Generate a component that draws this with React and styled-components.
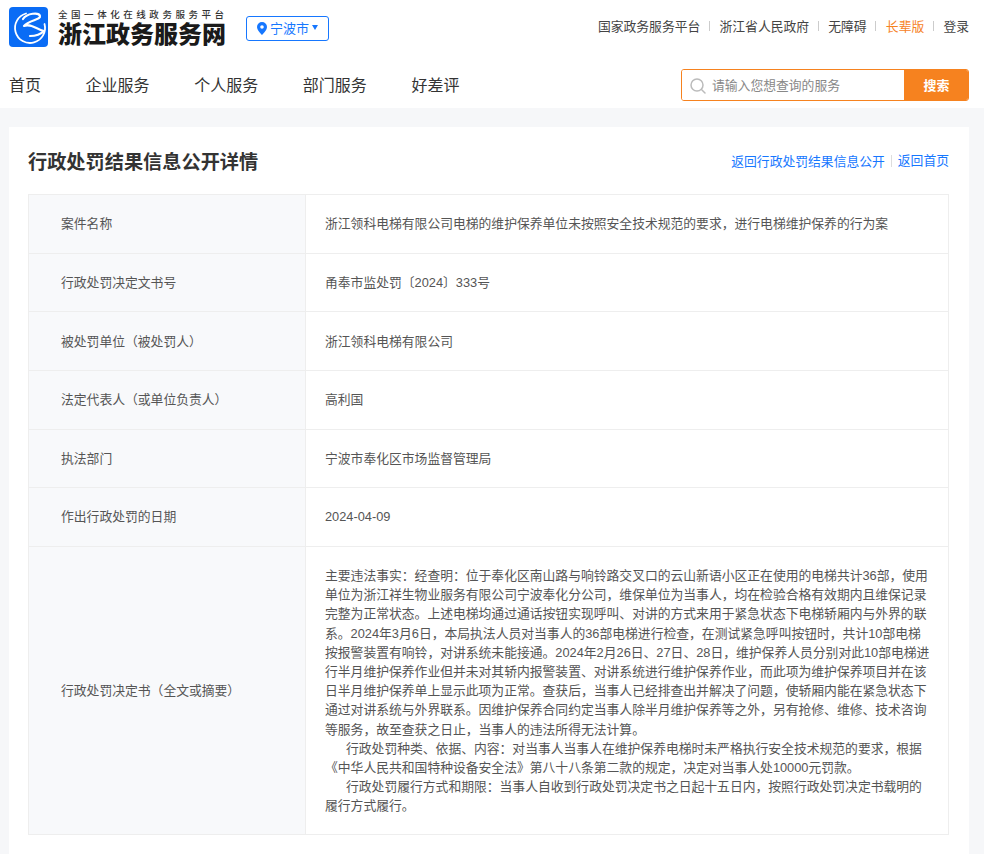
import React from "react";
import styled, { createGlobalStyle } from "styled-components";

const FONT = `"Liberation Sans", "Noto Sans CJK SC", sans-serif`;

const Global = createGlobalStyle`
  html, body { margin: 0; padding: 0; background: #f6f7f9; }
  body { font-family: ${FONT}; font-size: 12.8px; line-height: 19.2px; color: #555; overflow: hidden; }
  * { box-sizing: border-box; }
`;

const Header = styled.header`
  background: #fff;
  height: 108px;
  padding: 7px 15px 0 9px;
`;
const TopRow = styled.div`
  display: flex;
  align-items: flex-start;
  justify-content: space-between;
  height: 62px;
`;
const Brand = styled.div`
  display: flex;
  align-items: flex-start;
`;
const LogoText = styled.div`
  margin-left: 10px;
  width: 168px;
`;
const Slogan = styled.div`
  font-size: 9.5px;
  line-height: 12px;
  font-weight: 500;
  color: #333;
  letter-spacing: 3.55px;
  white-space: nowrap;
  margin-top: 2px;
`;
const SiteName = styled.div`
  font-size: 24px;
  line-height: 28px;
  font-weight: 900;
  color: #1a1a1a;
  white-space: nowrap;
`;
const CityButton = styled.div`
  display: flex;
  align-items: center;
  justify-content: center;
  gap: 3px;
  width: 83px;
  height: 25px;
  margin: 9px 0 0 20px;
  border: 1px solid #1677ff;
  border-radius: 3px;
  color: #1677ff;
  font-size: 13px;
`;
const Caret = styled.span`
  width: 0;
  height: 0;
  border-left: 3.5px solid transparent;
  border-right: 3.5px solid transparent;
  border-top: 5px solid #1677ff;
  margin-top: -2px;
`;
const TopLinks = styled.nav`
  display: flex;
  align-items: center;
  margin-top: 10px;
`;
const TopLink = styled.span`
  color: ${(p) => (p.$accent ? "#f6821f" : "#444")};
  padding: 0 9.6px;
  line-height: 19px;
  position: relative;
  &:last-child { padding-right: 0; }
  &:not(:last-child)::after {
    content: "";
    position: absolute;
    right: 0;
    top: 4px;
    height: 10px;
    width: 1px;
    background: #ccc;
  }
`;
const NavRow = styled.div`
  display: flex;
  align-items: flex-start;
  justify-content: space-between;
`;
const MainNav = styled.nav`
  display: flex;
  gap: 44.6px;
  margin-top: 1px;
`;
const NavItem = styled.span`
  font-size: 16px;
  line-height: 32px;
  color: #333;
`;
const Search = styled.div`
  display: flex;
  width: 288px;
  height: 32px;
  border: 1px solid #f6821f;
  border-radius: 3px;
  overflow: hidden;
`;
const SearchField = styled.div`
  flex: 1;
  display: flex;
  align-items: center;
  gap: 6px;
  padding: 1px 0 0 8px;
  background: #fff;
  color: #888;
`;
const SearchButton = styled.div`
  width: 64px;
  padding: 1px 0 0 1px;
  background: #f6821f;
  color: #fff;
  font-weight: 700;
  font-size: 13px;
  display: flex;
  align-items: center;
  justify-content: center;
`;
const Main = styled.main`
  padding: 19px 0 0 9px;
`;
const Card = styled.section`
  width: 960px;
  background: #fff;
  padding: 21px 20px 20px 19px;
`;
const CardHead = styled.div`
  display: flex;
  align-items: center;
  justify-content: space-between;
  height: 30px;
  margin-bottom: 16.3px;
`;
const Title = styled.h1`
  margin: 0;
  font-size: 19.2px;
  line-height: 30px;
  font-weight: 700;
  color: #333;
`;
const BackLinks = styled.div`
  display: flex;
  align-items: center;
  margin-top: -3px;
`;
const BackLink = styled.a`
  color: #1677ff;
  & + & {
    margin-left: 6px;
    padding-left: 6px;
    border-left: 1px solid #ddd;
    line-height: 12px;
  }
`;
const Table = styled.div`
  border: 1px solid #eee;
  border-bottom: 0;
`;
const Row = styled.div`
  display: grid;
  grid-template-columns: 277px 1fr;
  border-bottom: 1px solid #eee;
`;
const Label = styled.div`
  display: flex;
  align-items: center;
  background: #f8f9fb;
  border-right: 1px solid #eee;
  padding-left: 32px;
  color: #555;
`;
const Value = styled.div`
  padding: 19.2px 18.6px 19.2px 19px;
  color: #555;
  ${(p) => p.$long && "padding-bottom: 18.4px;"}
`;
const Para = styled.div`
  ${(p) => p.$indent && "text-indent: 21px;"}
`;

const Logo = () => (
  <svg width="39" height="40" viewBox="0 0 39 40">
    <rect width="39" height="40" rx="4" fill="#0a6cf5" />
    <path d="M17 6.500A15 15 0 1 0 35.500 17" fill="none" stroke="#fff" strokeWidth="1.800" strokeLinecap="round" />
    <path d="M14 12C18 6 30 5 31 9C32 13 20 13 15 19C22 16 27 22 35 24C31 28 26 29 21 29" fill="none" stroke="#fff" strokeWidth="2.200" strokeLinecap="round" strokeLinejoin="round" />
  </svg>
);

const Pin = () => (
  <svg width="10" height="13" viewBox="0 0 10 13">
    <path fillRule="evenodd" d="M5 0a5 5 0 0 1 5 5c0 3.300-5 8-5 8S0 8.300 0 5a5 5 0 0 1 5-5zm0 3.200a1.800 1.800 0 1 0 0 3.600 1.800 1.800 0 0 0 0-3.600z" fill="#1677ff" />
  </svg>
);

const SearchIcon = () => (
  <svg width="16" height="16" viewBox="0 0 16 16" fill="none" stroke="#bbb" strokeWidth="1.500" strokeLinecap="round">
    <circle cx="7" cy="7" r="6" />
    <path d="M11.500 11.500L15 15" />
  </svg>
);

const rows = [
  ["案件名称", "浙江领科电梯有限公司电梯的维护保养单位未按照安全技术规范的要求，进行电梯维护保养的行为案"],
  ["行政处罚决定文书号", "甬奉市监处罚〔2024〕333号"],
  ["被处罚单位（被处罚人）", "浙江领科电梯有限公司"],
  ["法定代表人（或单位负责人）", "高利国"],
  ["执法部门", "宁波市奉化区市场监督管理局"],
  ["作出行政处罚的日期", "2024-04-09"],
];

export default function App() {
  return (
    <>
      <Global />
      <Header>
        <TopRow>
          <Brand>
            <Logo />
            <LogoText>
              <Slogan>全国一体化在线政务服务平台</Slogan>
              <SiteName>浙江政务服务网</SiteName>
            </LogoText>
            <CityButton>
              <Pin />
              宁波市
              <Caret />
            </CityButton>
          </Brand>
          <TopLinks>
            <TopLink>国家政务服务平台</TopLink>
            <TopLink>浙江省人民政府</TopLink>
            <TopLink>无障碍</TopLink>
            <TopLink $accent>长辈版</TopLink>
            <TopLink>登录</TopLink>
          </TopLinks>
        </TopRow>
        <NavRow>
          <MainNav>
            <NavItem>首页</NavItem>
            <NavItem>企业服务</NavItem>
            <NavItem>个人服务</NavItem>
            <NavItem>部门服务</NavItem>
            <NavItem>好差评</NavItem>
          </MainNav>
          <Search>
            <SearchField>
              <SearchIcon />
              请输入您想查询的服务
            </SearchField>
            <SearchButton>搜索</SearchButton>
          </Search>
        </NavRow>
      </Header>
      <Main>
        <Card>
          <CardHead>
            <Title>行政处罚结果信息公开详情</Title>
            <BackLinks>
              <BackLink>返回行政处罚结果信息公开</BackLink>
              <BackLink>返回首页</BackLink>
            </BackLinks>
          </CardHead>
          <Table>
            {rows.map(([k, v]) => (
              <Row key={k}>
                <Label>{k}</Label>
                <Value>{v}</Value>
              </Row>
            ))}
            <Row>
              <Label>行政处罚决定书（全文或摘要）</Label>
              <Value $long>
                <Para>主要违法事实：经查明：位于奉化区南山路与响铃路交叉口的云山新语小区正在使用的电梯共计36部，使用单位为浙江祥生物业服务有限公司宁波奉化分公司，维保单位为当事人，均在检验合格有效期内且维保记录完整为正常状态。上述电梯均通过通话按钮实现呼叫、对讲的方式来用于紧急状态下电梯轿厢内与外界的联系。2024年3月6日，本局执法人员对当事人的36部电梯进行检查，在测试紧急呼叫按钮时，共计10部电梯按报警装置有响铃，对讲系统未能接通。2024年2月26日、27日、28日，维护保养人员分别对此10部电梯进行半月维护保养作业但并未对其轿内报警装置、对讲系统进行维护保养作业，而此项为维护保养项目并在该日半月维护保养单上显示此项为正常。查获后，当事人已经排查出并解决了问题，使轿厢内能在紧急状态下通过对讲系统与外界联系。因维护保养合同约定当事人除半月维护保养等之外，另有抢修、维修、技术咨询等服务，故至查获之日止，当事人的违法所得无法计算。</Para>
                <Para $indent>行政处罚种类、依据、内容：对当事人当事人在维护保养电梯时未严格执行安全技术规范的要求，根据《中华人民共和国特种设备安全法》第八十八条第二款的规定，决定对当事人处10000元罚款。</Para>
                <Para $indent>行政处罚履行方式和期限：当事人自收到行政处罚决定书之日起十五日内，按照行政处罚决定书载明的履行方式履行。</Para>
              </Value>
            </Row>
          </Table>
        </Card>
      </Main>
    </>
  );
}
